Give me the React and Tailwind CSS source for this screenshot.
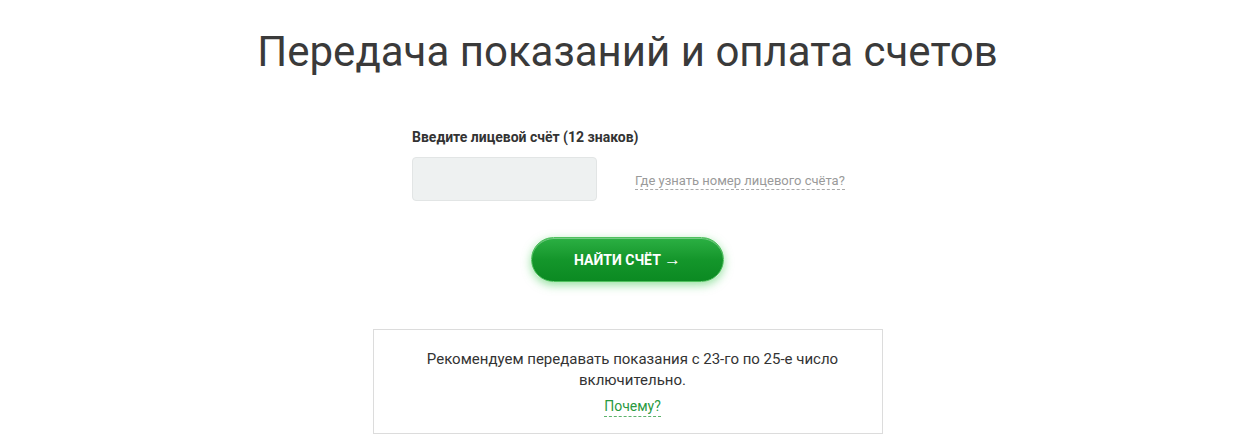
export default function App() {
  return (
    <div className="min-h-[439px] bg-white font-['Roboto',sans-serif] text-[#333]">
      <h1 className="pt-[27px] text-center text-[42px] leading-[50px] font-normal text-[#3a3a3a]">
        Передача показаний и оплата счетов
      </h1>

      <form className="mx-auto mt-[50px] w-[431px]" onSubmit={(e) => e.preventDefault()}>
        <label className="block text-[14px] leading-[20px] font-bold text-[#333]">
          Введите лицевой счёт (12 знаков)
        </label>
        <div className="mt-[10px] flex items-center">
          <input
            type="text"
            className="h-[44px] w-[185px] rounded-[4px] border border-[#e2e5e5] bg-[#eef1f1] px-3 outline-none"
          />
          <a
            href="#"
            className="ml-[38px] mt-[4px] whitespace-nowrap border-b border-dashed border-[#aaa] text-[13px] leading-[17px] text-[#9a9a9a]"
          >
            Где узнать номер лицевого счёта?
          </a>
        </div>
      </form>

      <div className="mt-[36px] flex justify-center">
        <button
          type="submit"
          className="h-[45px] w-[193px] rounded-full border border-[#4fc15e] bg-gradient-to-b from-[#2bb043] via-[#14962b] to-[#0b8a22] text-[14px] font-bold text-white shadow-[0_3px_10px_rgba(60,200,80,0.55),inset_0_1px_0_rgba(255,255,255,0.35)]"
        >
          НАЙТИ СЧЁТ <span className="text-[17px] font-normal">→</span>
        </button>
      </div>

      <div className="mx-auto mt-[47px] w-[510px] border border-[#dcdcdc] pr-[40px] pl-[50px] pt-[19px] pb-[15px] text-center">
        <p className="text-[15px] leading-[21px] text-[#333]">
          Рекомендуем передавать показания с 23-го по 25-е число включительно.
        </p>
        <a
          href="#"
          className="mt-[6px] inline-block border-b border-dashed border-[#5cb36c] text-[14px] leading-[19px] text-[#2a9a3f]"
        >
          Почему?
        </a>
      </div>
    </div>
  );
}
